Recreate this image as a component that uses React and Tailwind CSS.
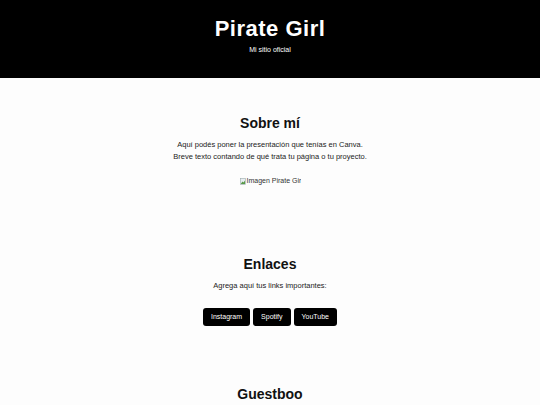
import React from 'react';

// Página personal: encabezado, secciones y enlaces
const links = ['Instagram', 'Spotify', 'YouTube'];

const BrokenImage = () => (
  <span className="inline-flex items-center h-[12px] w-[61px] overflow-hidden whitespace-nowrap text-[7px] leading-[12px] text-[#333]">
    <svg width="6" height="7" viewBox="0 0 6 7" className="mr-[1px] shrink-0">
      <rect x="0.5" y="0.5" width="5" height="6" fill="#e8eef3" stroke="#9aa" strokeWidth="0.6" />
      <path d="M1 5.5 L2.5 3.5 L3.5 4.5 L5 2.5 V6 H1 Z" fill="#5a9a4a" />
    </svg>
    Imagen Pirate Girl
  </span>
);

export default function App() {
  return (
    <div className="min-h-[405px] bg-[#fdfdfd] font-['Liberation_Sans',Arial,sans-serif] text-[#111]">
      <header className="h-[78px] bg-black flex flex-col items-center text-white">
        <h1 className="mt-[17px] text-[22px] leading-[24px] font-bold tracking-[0.5px]">Pirate Girl</h1>
        <p className="mt-[5px] text-[7px] leading-[8px]">Mi sitio oficial</p>
      </header>

      <main className="flex flex-col items-center text-center">
        <section className="pt-[37px] flex flex-col items-center">
          <h2 className="text-[14px] leading-[16px] font-bold">Sobre mí</h2>
          <p className="mt-[8px] text-[7.5px] leading-[12px] text-[#222]">
            Aquí podés poner la presentación que tenías en Canva.
            <br />
            Breve texto contando de qué trata tu página o tu proyecto.
          </p>
          <div className="mt-[12px] flex h-[12px]">
            <BrokenImage />
          </div>
        </section>

        <section className="pt-[69px] flex flex-col items-center">
          <h2 className="text-[14px] leading-[16px] font-bold">Enlaces</h2>
          <p className="mt-[8px] text-[7.5px] leading-[12px] text-[#222]">Agrega aquí tus links importantes:</p>
          <div className="mt-[16px] flex gap-[3px]">
            {links.map((l) => (
              <a
                key={l}
                href="#"
                className="h-[18px] px-[8px] flex items-center bg-black text-white text-[7px] rounded-[3px]"
              >
                {l}
              </a>
            ))}
          </div>
        </section>

        <section className="pt-[60px] flex flex-col items-center">
          <h2 className="text-[14px] leading-[16px] font-bold">Guestboo</h2>
        </section>
      </main>
    </div>
  );
}
